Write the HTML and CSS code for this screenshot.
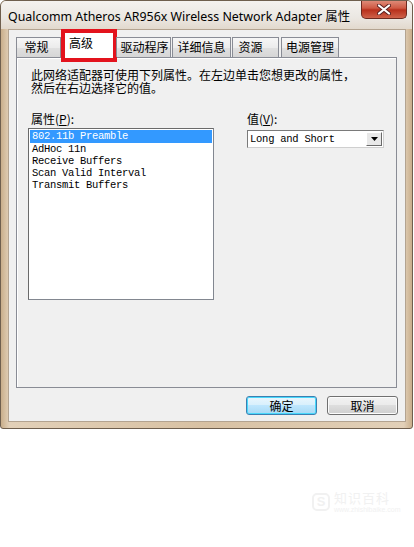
FILE: index.html
```html
<!DOCTYPE html>
<html lang="zh-CN">
<head>
  <meta charset="UTF-8">
  <title>Qualcomm Atheros AR956x Wireless Network Adapter 属性</title>
  <link rel="stylesheet" href="styles.css">
</head>
<body>

<!-- Dialog window -->
<div class="window">
  <div class="titlebar">
    <span class="title">Qualcomm Atheros AR956x Wireless Network Adapter 属性</span>
    <button class="close" aria-label="关闭">
      <svg width="14" height="11" viewBox="0 0 14 11">
        <path d="M2 1.5 L12 9.5 M12 1.5 L2 9.5" stroke="#5a2020" stroke-width="4" stroke-linecap="round"/>
        <path d="M2 1.5 L12 9.5 M12 1.5 L2 9.5" stroke="#fff" stroke-width="2.2" stroke-linecap="round"/>
      </svg>
    </button>
  </div>

  <div class="client">
    <!-- Tabs -->
    <div class="tabs">
      <div class="tab tab-general">常规</div>
      <div class="tab active">高级</div>
      <div class="tab tab-driver">驱动程序</div>
      <div class="tab tab-details">详细信息</div>
      <div class="tab tab-res">资源</div>
      <div class="tab tab-power">电源管理</div>
    </div>

    <!-- Advanced page -->
    <div class="panel">
      <p class="intro">此网络适配器可使用下列属性。在左边单击您想更改的属性，</p>
      <p class="intro">然后在右边选择它的值。</p>

      <div class="fields">
        <div class="field-left">
          <label class="field-label">属性(<u>P</u>):</label>
          <ul class="listbox">
            <li class="selected">802.11b Preamble</li>
            <li>AdHoc 11n</li>
            <li>Receive Buffers</li>
            <li>Scan Valid Interval</li>
            <li>Transmit Buffers</li>
          </ul>
        </div>
        <div class="field-right">
          <label class="field-label">值(<u>V</u>):</label>
          <div class="combo">
            <span class="combo-text">Long and Short</span>
            <span class="combo-btn">
              <svg width="7" height="4" viewBox="0 0 7 4"><path d="M0 0 H7 L3.5 4 Z" fill="#000"/></svg>
            </span>
          </div>
        </div>
      </div>
    </div>

    <!-- Dialog buttons -->
    <div class="buttons">
      <button class="btn default">确定</button>
      <button class="btn">取消</button>
    </div>
  </div>
</div>

<!-- faint watermark -->
<div class="watermark">
  <span class="wm-logo">S</span>
  <div class="wm-text">
    <span class="wm-name">知识百科</span>
    <span class="wm-sub">www.zhishibaike.com</span>
  </div>
</div>

</body>
</html>
```

FILE: styles.css
```css
/* General Reset */
* {
  margin: 0;
  padding: 0;
  box-sizing: border-box;
}

body {
  background: #fff;
  font-family: "Noto Sans CJK SC", "Noto Sans", sans-serif;
  font-size: 12px;
  color: #000;
  width: 414px;
}

/* Window frame */
.window {
  width: 413px;
  height: 429px;
  border: 1px solid #6f5f4e;
  border-radius: 6px 6px 3px 3px;
  background: linear-gradient(90deg, #c9ae8b, #e2d0b8 2%, #d8c1a3 50%, #e2d0b8 98%, #c9ae8b);
  display: flex;
  flex-direction: column;
  overflow: hidden;
}

.titlebar {
  height: 28px;
  display: flex;
  align-items: center;
  padding-left: 7px;
  background: linear-gradient(#f4f2ef, #ebe7e2 60%, #e2d9cd);
}

.title {
  font-family: "Noto Sans", "Noto Sans CJK SC", sans-serif;
  font-size: 12.4px;
  color: #000;
  white-space: nowrap;
  padding-top: 1px;
}

.close {
  margin-left: auto;
  margin-right: 5px;
  align-self: flex-start;
  margin-top: -1px;
  width: 46px;
  height: 19px;
  border: 1px solid #6d2a20;
  border-top: none;
  border-radius: 0 0 5px 5px;
  background: linear-gradient(#e0907e, #cf5a44 45%, #b8301c 55%, #cf624a);
  display: flex;
  align-items: center;
  justify-content: center;
}

/* Client area */
.client {
  flex: 1;
  margin: 0 6px 6px 7px;
  background: #f0f0f0;
  border: 1px solid #b3a390;
  display: flex;
  flex-direction: column;
}

/* Tabs */
.tabs {
  height: 27px;
  display: flex;
  align-items: flex-end;
  padding-left: 7px;
  position: relative;
  z-index: 2;
}

.tab {
  height: 20px;
  border: 1px solid #898c95;
  border-bottom: none;
  background: linear-gradient(#f6f6f6, #ececec 50%, #e0e0e0 51%, #d6d6d6);
  line-height: 18px;
  text-align: center;
  white-space: nowrap;
}

.tab-general { width: 45px; padding-right: 4px; }
.tab-driver { width: 55px; margin-left: -1px; padding-left: 2px; }
.tab-details { width: 59px; margin-left: 1px; }
.tab-res { width: 47px; margin-left: 1px; padding-right: 10px; }
.tab-power { width: 58px; margin-left: 2px; }

.tab.active {
  width: 56px;
  height: 33px;
  margin-bottom: -5px;
  border: 4px solid #e3131d;
  background: #fff;
  text-align: left;
  padding-left: 4px;
  line-height: 19px;
}

/* Tab page */
.panel {
  height: 331px;
  margin: 0 8px 0 7px;
  border: 1px solid #898c95;
  box-shadow: inset 1px 1px 0 #fff;
  background: #f0f0f0;
  padding: 10px 13px 0 11px;
}

.intro {
  line-height: 13px;
  height: 13px;
  padding-left: 3px;
}

.fields {
  display: flex;
  gap: 30px;
  margin-top: 18px;
}

.field-label {
  display: block;
  line-height: 13px;
  padding-left: 3px;
}

.field-label u {
  text-decoration: underline;
}

.listbox {
  list-style: none;
  width: 186px;
  height: 172px;
  margin-top: 3px;
  background: #fff;
  border: 1px solid #828790;
  border-top-color: #6a6a6a;
  border-left-color: #6a6a6a;
  padding: 1px 1px;
  font-family: "Liberation Mono", "DejaVu Sans Mono", monospace;
  font-size: 10.5px;
  letter-spacing: -0.3px;
}

.listbox li {
  height: 12px;
  line-height: 12px;
  padding-left: 2px;
  white-space: nowrap;
}

.listbox li.selected {
  height: 13px;
  line-height: 13px;
  background: #3399ff;
  color: #fff;
}

.combo {
  margin: 5px 0 0 3px;
  width: 137px;
  height: 18px;
  background: #fff;
  border: 1px solid #7a7a7a;
  border-right-color: #cfcfcf;
  border-bottom-color: #cfcfcf;
  display: flex;
  align-items: center;
  padding-left: 2px;
  font-family: "Liberation Mono", "DejaVu Sans Mono", monospace;
  font-size: 10.5px;
  letter-spacing: -0.25px;
}

.combo-text {
  flex: 1;
  white-space: nowrap;
}

.combo-btn {
  width: 16px;
  height: 14px;
  margin-right: 1px;
  background: #e8e8e8;
  border: 1px solid;
  border-color: #fff #6a6a6a #6a6a6a #fff;
  display: flex;
  align-items: center;
  justify-content: center;
}

/* Buttons */
.buttons {
  display: flex;
  justify-content: flex-end;
  gap: 10px;
  padding: 8px 7px 0 0;
}

.btn {
  width: 71px;
  height: 19px;
  font-family: "Noto Sans CJK SC", sans-serif;
  font-size: 12px;
  color: #000;
  border: 1px solid #707070;
  border-radius: 3px;
  background: linear-gradient(#f2f2f2, #ebebeb 45%, #dddddd 50%, #cfcfcf);
  box-shadow: inset 0 0 0 1px #fcfcfc;
  line-height: 16px;
}

.btn.default {
  border-color: #3c7fb1;
  background: linear-gradient(#eaf6fd, #d9f0fc 45%, #bee6fd 50%, #a7d9f5);
  box-shadow: inset 0 0 0 1px #48d8fb;
}

/* Watermark */
.watermark {
  display: flex;
  align-items: center;
  gap: 4px;
  margin: 61px 0 0 312px;
  color: #f1f1f1;
}

.wm-logo {
  width: 18px;
  height: 18px;
  border-radius: 5px;
  border: 2px solid #f1f1f1;
  font-family: "Liberation Sans", sans-serif;
  font-weight: bold;
  font-size: 13px;
  line-height: 14px;
  text-align: center;
}

.wm-text {
  display: flex;
  flex-direction: column;
}

.wm-name {
  font-size: 13px;
  line-height: 15px;
  letter-spacing: 1px;
}

.wm-sub {
  font-family: "Liberation Sans", sans-serif;
  font-size: 7px;
  line-height: 9px;
}
```
